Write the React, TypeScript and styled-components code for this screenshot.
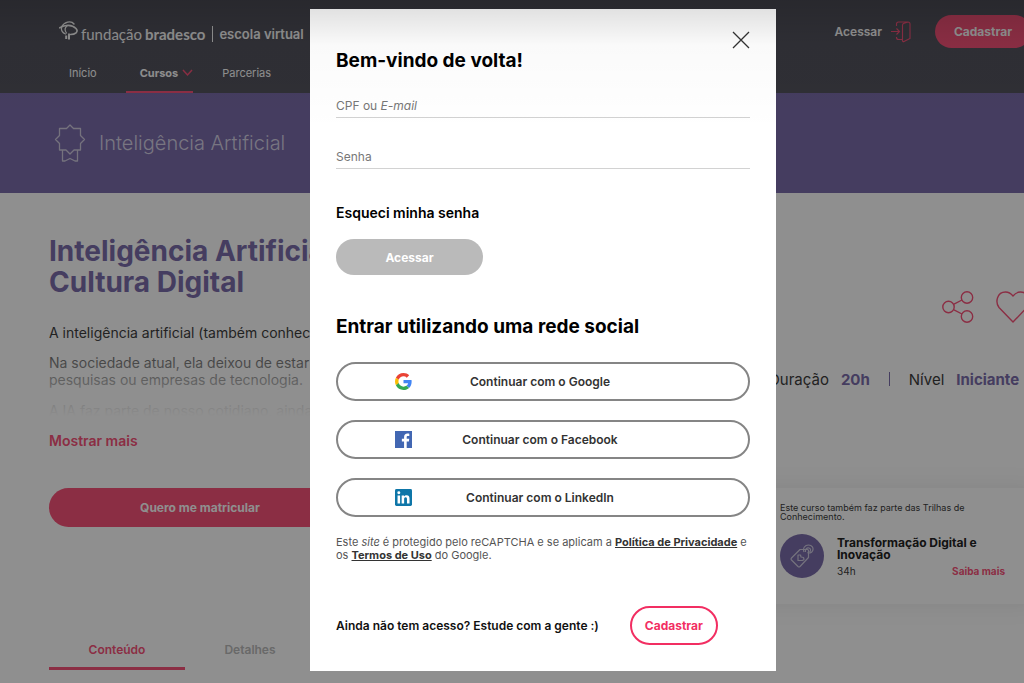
import React from 'react';
import styled, { createGlobalStyle, css } from 'styled-components';

const color = {
  brand: '#f85279',
  pink: '#f22e62',
  purple: '#7b6dab',
  header: '#55555f',
};

const GlobalStyle = createGlobalStyle`
  *, *::before, *::after { box-sizing: border-box; }
  body { margin: 0; background: #fff; font-family: Inter, 'Liberation Sans', sans-serif; color: #3c3c3c; }
  h1, h2, h3, p { margin: 0; }
  button, input { font-family: inherit; margin: 0; }
  a { color: inherit; text-decoration: none; }
`;

const Viewport = styled.div`
  overflow: hidden;
  min-height: 100vh;
  display: flex;
`;

const Page = styled.div`
  position: relative;
  flex: none;
  width: calc(100% + 62px);
`;

const Header = styled.header`
  display: flex;
  justify-content: space-between;
  align-items: flex-start;
  height: 93px;
  padding: 15px 55px 0 59px;
  background: ${color.header};
  color: #fff;
`;

const Brand = styled.div`
  display: flex;
  flex-direction: column;
  gap: 19px;
`;

const Logo = styled.a`
  display: flex;
  align-items: center;
  height: 32px;
  font-family: Lato, sans-serif;
  font-size: 15px;
  line-height: 20px;
  white-space: nowrap;
  padding-top: 6px;
  svg { margin-right: 2px; align-self: flex-start; }
  b { margin-left: 3px; }
`;

const LogoSuffix = styled.span`
  margin-left: 7px;
  padding-left: 6px;
  border-left: 1px solid #fff;
  font-family: Inter, sans-serif;
  font-weight: 600;
  font-size: 13px;
  line-height: 16px;
`;

const Nav = styled.nav`
  display: flex;
  gap: 29px;
  padding-left: 10px;
`;

const NavLink = styled.a<{ $active?: boolean }>`
  display: flex;
  gap: 4px;
  height: 27px;
  font-size: 11px;
  line-height: 14px;
  ${(p) => p.$active && css`
    padding-left: 14px;
    border-bottom: 2px solid ${color.brand};
    font-weight: 700;
  `}
  svg { margin-top: 3px; }
`;

const Account = styled.div`
  display: flex;
  align-items: center;
  gap: 24px;
`;

const SignIn = styled.a`
  display: flex;
  align-items: center;
  gap: 8px;
  font-size: 12px;
  font-weight: 600;
`;

const Pill = styled.button<{ $width: number; $height: number; $bg: string; $outlined?: boolean }>`
  width: ${(p) => p.$width}px;
  height: ${(p) => p.$height}px;
  padding: 0;
  border: ${(p) => (p.$outlined ? `2px solid ${color.pink}` : '0')};
  border-radius: 20px;
  background: ${(p) => p.$bg};
  color: ${(p) => (p.$outlined ? color.pink : '#fff')};
  font-size: 12px;
  font-weight: 700;
`;

const Banner = styled.div`
  display: flex;
  align-items: center;
  gap: 13px;
  height: 100px;
  padding-left: 54px;
  background: ${color.purple};
  color: #d6d2e6;
  font-size: 20px;
  font-weight: 300;
`;

const Columns = styled.main`
  display: grid;
  grid-template-columns: 1fr 289px;
  padding: 0 49px;
`;

const Course = styled.section`
  padding-top: 43px;
`;

const Title = styled.h1`
  color: ${color.purple};
  font-size: 28px;
  line-height: 31px;
  font-weight: 700;
`;

const Summary = styled.div`
  position: relative;
  display: grid;
  gap: 12px;
  height: 96px;
  margin-top: 26px;
  overflow: hidden;
  font-size: 14px;
  line-height: 17px;
  &::after {
    content: '';
    position: absolute;
    inset: 0;
    background: linear-gradient(rgba(255, 255, 255, 0) 10%, #fff 96%);
  }
`;

const MoreLink = styled.a`
  display: block;
  margin-top: 12px;
  color: ${color.brand};
  font-size: 14px;
  line-height: 17px;
  font-weight: 600;
`;

const Enroll = styled.div`
  margin-top: 39px;
`;

const Tabs = styled.div`
  display: flex;
  margin-top: 107px;
`;

const Tab = styled.button<{ $active?: boolean }>`
  width: ${(p) => (p.$active ? 136 : 130)}px;
  height: 36px;
  padding: 0 0 2px;
  border: 0;
  border-bottom: 3px solid ${(p) => (p.$active ? color.brand : 'transparent')};
  background: none;
  color: ${(p) => (p.$active ? color.brand : '#bbb')};
  font-size: 12px;
  font-weight: 600;
`;

const Aside = styled.aside`
  padding-top: 98px;
`;

const Actions = styled.div`
  display: flex;
  justify-content: flex-end;
  gap: 22px;
  padding-right: 7px;
`;

const IconButton = styled.button`
  display: flex;
  padding: 0;
  border: 0;
  background: none;
`;

const Facts = styled.div`
  display: flex;
  align-items: center;
  height: 18px;
  margin-top: 47px;
  padding-left: 21px;
  font-size: 15px;
  b { margin-left: 12px; color: ${color.purple}; }
`;

const Divider = styled.span`
  width: 1px;
  height: 14px;
  margin: 0 19px;
  background: ${color.purple};
`;

const Card = styled.section`
  height: 116px;
  margin-top: 100px;
  padding: 15px 32px;
  box-shadow: 0 0 24px rgba(0, 0, 0, 0.08);
  font-size: 9px;
  line-height: 9px;
`;

const Trail = styled.div`
  display: flex;
  gap: 13px;
  margin-top: 13px;
`;

const TrailIcon = styled.span`
  display: flex;
  flex: none;
  align-items: center;
  justify-content: center;
  width: 44px;
  height: 44px;
  border-radius: 50%;
  background: ${color.purple};
`;

const TrailBody = styled.div`
  flex: 1;
  padding-top: 3px;
`;

const TrailTitle = styled.h3`
  color: #222;
  font-size: 12px;
  line-height: 12px;
`;

const TrailMeta = styled.div`
  display: flex;
  justify-content: space-between;
  margin-top: 3px;
  font-size: 10px;
  line-height: 14px;
  a { color: ${color.brand}; font-weight: 700; }
`;

const Overlay = styled.div`
  position: absolute;
  inset: 0;
  display: flex;
  justify-content: center;
  align-items: flex-start;
  padding-top: 9px;
  background: rgba(0, 0, 0, 0.44);
`;

const TopShade = styled.div`
  position: absolute;
  inset: 0 0 auto;
  height: 130px;
  pointer-events: none;
  background: linear-gradient(rgba(0, 0, 0, 0.14), rgba(0, 0, 0, 0.02) 35%, rgba(0, 0, 0, 0));
`;

const Dialog = styled.section`
  display: flex;
  flex-direction: column;
  width: 466px;
  padding: 22px 26px 26px;
  background: #fff;
  color: #111;
`;

const Close = styled.button`
  display: flex;
  align-self: flex-end;
  padding: 0;
  border: 0;
  background: none;
`;

const Heading = styled.h2`
  color: #000;
  font-size: 19px;
  line-height: 24px;
  font-weight: 700;
`;

const Field = styled.div`
  display: grid;
  height: 26px;
  margin-bottom: 25px;
  border-bottom: 1px solid #d2d2d2;
  label, input { grid-area: 1 / 1; }
  label { color: #777; font-size: 12px; line-height: 27px; pointer-events: none; }
  input { border: 0; padding: 0; background: none; font-size: 12px; outline: 0; }
`;

const Form = styled.form`
  display: flex;
  flex-direction: column;
  margin-top: 19px;
`;

const Forgot = styled.a`
  margin: 10px 0 18px;
  font-size: 14px;
  line-height: 17px;
  font-weight: 600;
  color: #000;
`;

const SocialList = styled.div`
  display: grid;
  gap: 19px;
  margin: 23px 0 19px;
`;

const SocialButton = styled.button`
  display: grid;
  grid-template-columns: 74px 1fr 80px;
  align-items: center;
  height: 39px;
  padding: 0;
  border: 2px solid #858585;
  border-radius: 20px;
  background: #fff;
  color: #333;
  font-size: 12px;
  font-weight: 600;
  svg { justify-self: end; }
`;

const Legal = styled.p`
  margin-right: -2px;
  color: #555;
  font-size: 11px;
  line-height: 13px;
  a { color: #333; font-weight: 700; text-decoration: underline; }
`;

const Join = styled.div`
  display: flex;
  align-items: center;
  gap: 31px;
  margin-top: 44px;
  font-size: 12px;
  font-weight: 600;
`;

const TreeMark = () => (
  <svg width="20" height="21" viewBox="0 0 20 21" fill="none" stroke="#fff" strokeLinecap="round">
    <path d="M2.500 6C5 1 12-1 15 3" strokeWidth="1.400" />
    <path d="M.8 6.800C6 3.500 13 3.500 17 7.500 20 11 16 13.500 11.500 13.500" strokeWidth="1.600" />
    <path d="M2.500 6.500C2 10 4 12 6.500 13M8 5C5.500 7 6 10 7.500 12" strokeWidth="1.200" />
    <path d="M7.200 14.500v3.500M10 12.500v6" strokeWidth="2" strokeLinecap="butt" />
  </svg>
);

const Chevron = () => (
  <svg width="11" height="8" viewBox="0 0 11 8" fill="none" stroke={color.brand} strokeWidth="1.5">
    <path d="M1 1l4.500 5L10 1" />
  </svg>
);

const DoorIcon = () => (
  <svg width="21" height="22" viewBox="0 0 21 22" fill="none" stroke={color.brand} strokeWidth="1.1">
    <path d="M1 10.500h8M6.500 7.500l3 3-3 3M6.500 5V3a2 2 0 0 1 2-2H18a2 2 0 0 1 2 2v14.500l-6 3a1 1 0 0 1-1.500-1V4a2 2 0 0 1 1-1.500L18 1M6.500 16v.500a2 2 0 0 0 2 2h4" />
  </svg>
);

const AwardIcon = () => (
  <svg width="32" height="38" viewBox="0 0 32 38" fill="none" stroke="#d0ccdf" strokeWidth="1.3" strokeLinejoin="round">
    <path d="M16 1l3.500 3.500H26.500V11.500L30.500 15.500 26.500 19.500V26H20L16 30l-4-4H5.500V19.500L1.500 15.500 5.500 11.500V4.500h7z" />
    <path d="M8.500 26V37H11l5-2.500 5 2.500h2.500V26" />
  </svg>
);

const ShareIcon = () => (
  <svg width="32" height="32" viewBox="0 0 32 32" fill="none" stroke={color.brand} strokeWidth="1.4">
    <circle cx="6.500" cy="16" r="5.700" />
    <circle cx="25" cy="6.500" r="5.700" />
    <circle cx="25" cy="25.500" r="5.700" />
    <path d="M11.500 13.300L20 9M11.500 18.700L20 23" />
  </svg>
);

const HeartIcon = () => (
  <svg width="34" height="32" viewBox="0 0 34 32" fill="none" stroke={color.brand} strokeWidth="1.4" strokeLinejoin="round">
    <path d="M17 31L3 16.500C-1 11 1 1 9.500 1 13 1 15 2.500 17 5c2-2.500 4-4 7.500-4C33 1 35 11 31 16.500z" />
  </svg>
);

const TagIcon = () => (
  <svg width="24" height="24" viewBox="0 0 24 24" fill="none" stroke="#cfcbe0" strokeWidth="1.2" strokeLinejoin="round">
    <path d="M1.500 14L10 5.500h7.500a1 1 0 0 1 1 1V13.500L10 22.500a1.500 1.500 0 0 1-2 0l-6.500-6.500a1.500 1.500 0 0 1 0-2z" />
    <path d="M14 8C12.500 4 15 1 18.500 1S24 4 22.500 7c-1 2-3.500 2.500-5 1.500M15.500 8C15 5 17 3.500 19 4s2 3 .5 4" />
    <path d="M8 16.500V11l2.500 0 .5 2 2.500.500.500 2L12.500 16.500z" />
  </svg>
);

const CloseIcon = () => (
  <svg width="18" height="18" viewBox="0 0 18 18" stroke="#333" strokeWidth="1.3">
    <path d="M1 1l16 16M17 1L1 17" />
  </svg>
);

const GoogleIcon = () => (
  <svg width="17" height="17" viewBox="0 0 48 48">
    <path fill="#EA4335" d="M24 9.500c3.540 0 6.710 1.220 9.210 3.600l6.850-6.850C35.900 2.380 30.470 0 24 0 14.620 0 6.510 5.380 2.560 13.220l7.980 6.190C12.430 13.720 17.740 9.500 24 9.500z" />
    <path fill="#4285F4" d="M46.980 24.550c0-1.570-.15-3.090-.38-4.550H24v9.020h12.940c-.58 2.960-2.260 5.480-4.780 7.180l7.730 6c4.510-4.180 7.090-10.360 7.090-17.650z" />
    <path fill="#FBBC05" d="M10.530 28.590c-.48-1.450-.76-2.990-.76-4.590s.27-3.140.76-4.590l-7.980-6.190C.92 16.460 0 20.120 0 24c0 3.880.92 7.540 2.560 10.780l7.970-6.190z" />
    <path fill="#34A853" d="M24 48c6.480 0 11.930-2.130 15.890-5.810l-7.730-6c-2.150 1.450-4.920 2.300-8.160 2.300-6.260 0-11.570-4.220-13.470-9.910l-7.980 6.190C6.510 42.620 14.620 48 24 48z" />
  </svg>
);

const FacebookIcon = () => (
  <svg width="17" height="17" viewBox="0 0 24 24">
    <path fill="#4267B2" d="M0 0h24v24H0z" />
    <path fill="#fff" d="M16.500 24v-9.300h3.100l.5-3.600h-3.600V8.800c0-1.100.3-1.800 1.800-1.800h1.900V3.800C19.900 3.700 18.800 3.600 17.500 3.600c-2.800 0-4.700 1.700-4.700 4.800v2.700H9.700v3.600h3.100V24z" />
  </svg>
);

const LinkedInIcon = () => (
  <svg width="17" height="17" viewBox="0 0 24 24">
    <rect width="24" height="24" rx="2" fill="#0e76a8" />
    <circle cx="5.400" cy="5.400" r="2.100" fill="#fff" />
    <path fill="#fff" d="M3.600 9h3.600v11.400H3.600zM9.400 9h3.400v1.600c.5-.9 1.600-1.900 3.400-1.900 3.600 0 4.300 2.400 4.300 5.500v6.200h-3.600v-5.600c0-1.300 0-3-1.900-3s-2.100 1.400-2.100 2.900v5.700H9.400z" />
  </svg>
);

const providers = [
  { name: 'Google', icon: <GoogleIcon /> },
  { name: 'Facebook', icon: <FacebookIcon /> },
  { name: 'LinkedIn', icon: <LinkedInIcon /> },
];

const SiteHeader = () => (
  <Header>
    <Brand>
      <Logo href="#">
        <TreeMark />
        fundação<b>bradesco</b>
        <LogoSuffix>escola virtual</LogoSuffix>
      </Logo>
      <Nav>
        <NavLink href="#">Início</NavLink>
        <NavLink href="#" $active>Cursos<Chevron /></NavLink>
        <NavLink href="#">Parcerias</NavLink>
      </Nav>
    </Brand>
    <Account>
      <SignIn href="#">Acessar<DoorIcon /></SignIn>
      <Pill $width={96} $height={33} $bg={color.brand}>Cadastrar</Pill>
    </Account>
  </Header>
);

const SocialTitle = styled(Heading)`
  margin-top: 40px;
`;

const LoginDialog = () => (
  <Dialog role="dialog" aria-labelledby="welcome">
    <Close aria-label="Fechar"><CloseIcon /></Close>
    <Heading id="welcome">Bem-vindo de volta!</Heading>
    <Form onSubmit={(e) => e.preventDefault()}>
      <Field>
        <label htmlFor="user">CPF ou <em>E-mail</em></label>
        <input id="user" type="text" />
      </Field>
      <Field>
        <label htmlFor="password">Senha</label>
        <input id="password" type="password" />
      </Field>
      <Forgot href="#">Esqueci minha senha</Forgot>
      <Pill type="submit" $width={147} $height={36} $bg="#bababa">Acessar</Pill>
    </Form>
    <SocialTitle>Entrar utilizando uma rede social</SocialTitle>
    <SocialList>
      {providers.map((p) => (
        <SocialButton key={p.name}>
          {p.icon}
          <span>Continuar com o {p.name}</span>
        </SocialButton>
      ))}
    </SocialList>
    <Legal>
      Este <em>site</em> é protegido pelo reCAPTCHA e se aplicam a{' '}
      <a href="#">Política de Privacidade</a> e os <a href="#">Termos de Uso</a> do Google.
    </Legal>
    <Join>
      <span>Ainda não tem acesso? Estude com a gente :)</span>
      <Pill $width={88} $height={39} $bg="#fff" $outlined>Cadastrar</Pill>
    </Join>
  </Dialog>
);

export default function App() {
  return (
    <Viewport>
      <GlobalStyle />
      <Page>
        <SiteHeader />
        <Banner><AwardIcon />Inteligência Artificial</Banner>
        <Columns>
          <Course>
            <Title>Inteligência Artificial<br />Cultura Digital</Title>
            <Summary>
              <p>A inteligência artificial (também conhecida</p>
              <p>Na sociedade atual, ela deixou de estar presente<br />pesquisas ou empresas de tecnologia.</p>
              <p>A IA faz parte de nosso cotidiano, ainda que</p>
            </Summary>
            <MoreLink href="#">Mostrar mais</MoreLink>
            <Enroll><Pill $width={302} $height={39} $bg={color.brand}>Quero me matricular</Pill></Enroll>
            <Tabs>
              <Tab $active>Conteúdo</Tab>
              <Tab>Detalhes</Tab>
            </Tabs>
          </Course>
          <Aside>
            <Actions>
              <IconButton aria-label="Compartilhar"><ShareIcon /></IconButton>
              <IconButton aria-label="Favoritar"><HeartIcon /></IconButton>
            </Actions>
            <Facts>Duração<b>20h</b><Divider />Nível<b>Iniciante</b></Facts>
            <Card>
              <p>Este curso também faz parte das Trilhas de Conhecimento.</p>
              <Trail>
                <TrailIcon><TagIcon /></TrailIcon>
                <TrailBody>
                  <TrailTitle>Transformação Digital e Inovação</TrailTitle>
                  <TrailMeta><span>34h</span><a href="#">Saiba mais</a></TrailMeta>
                </TrailBody>
              </Trail>
            </Card>
          </Aside>
        </Columns>
        <Overlay><LoginDialog /></Overlay>
        <TopShade />
      </Page>
    </Viewport>
  );
}
